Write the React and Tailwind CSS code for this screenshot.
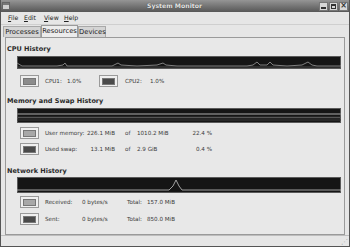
import React from 'react';

const font = { fontFamily: '"DejaVu Sans", "Liberation Sans", sans-serif' };

const Swatch = ({ color }) => (
  <div className="w-[19px] h-[12px] border border-[#9a9a9a] bg-[#efefef] flex items-center justify-center shrink-0">
    <div className={`w-[13px] h-[7px] border border-[#777] ${color}`} />
  </div>
);

const Grid = ({ h }) => {
  const rows = [];
  for (let y = 2; y < h; y += 2) rows.push(y);
  return rows.map((y) => (
    <line key={y} x1="0" y1={y} x2="324" y2={y} stroke="#2a2a2a" strokeWidth="1" />
  ));
};

const CpuGraph = () => (
  <svg width="324" height="13" className="block">
    <rect width="324" height="13" fill="#000" />
    <Grid h={13} />
    <rect x="0.5" y="0.5" width="323" height="12" fill="none" stroke="#5a5a5a" />
    <polyline
      fill="none"
      stroke="#9a9a9a"
      strokeWidth="0.8"
      points="0,7 5,10 40,10 46,9 48,7 50,10 95,10 99,8 101,7 104,9 120,10 140,9 146,7 149,9 160,10 230,10 236,9 240,6 243,9 250,9 253,6 256,9 270,10 285,9 291,6 295,9 300,10 324,10"
    />
    <polyline fill="none" stroke="#555" strokeWidth="0.8" points="0,11 324,11" />
  </svg>
);

const MemGraph = () => (
  <svg width="324" height="15" className="block">
    <rect width="324" height="15" fill="#000" />
    <Grid h={15} />
    <rect x="0.5" y="0.5" width="323" height="14" fill="none" stroke="#5a5a5a" />
    <line x1="0" y1="6" x2="324" y2="6" stroke="#7a7a7a" strokeWidth="1.4" />
    <line x1="0" y1="9.5" x2="324" y2="9.5" stroke="#555" strokeWidth="1.4" />
    <line x1="0" y1="12" x2="324" y2="12" stroke="#3a3a3a" strokeWidth="1" />
  </svg>
);

const NetGraph = () => (
  <svg width="324" height="16" className="block">
    <rect width="324" height="16" fill="#000" />
    <Grid h={16} />
    <rect x="0.5" y="0.5" width="323" height="15" fill="none" stroke="#5a5a5a" />
    <polyline
      fill="none"
      stroke="#b0b0b0"
      strokeWidth="0.9"
      points="0,13 152,13 156,9 159,3 162,9 165,13 324,13"
    />
  </svg>
);

const Heading = ({ children, className = '' }) => (
  <div className={`text-[6.5px] font-bold text-[#2a2a2a] leading-[10px] pl-[1px] whitespace-nowrap ${className}`}>
    {children}
  </div>
);

export default function App() {
  return (
    <div
      className="w-[350px] h-[247px] bg-[#e6e6e6] border-x border-[#555] flex flex-col overflow-hidden"
      style={font}
    >
      {/* title bar */}
      <div className="h-[12px] bg-gradient-to-b from-[#959595] to-[#575757] flex items-center shrink-0">
        <div className="ml-[1px] w-[8px] h-[8px] bg-[#cfcfcf] border border-[#666] flex items-start">
          <div className="w-full h-[2px] bg-[#777]" />
        </div>
        <div className="flex-1 text-center text-[6.2px] font-bold text-[#e4e4e4] leading-[12px] pl-[20px] [text-shadow:0_0_1px_#333]">
          System Monitor
        </div>
        <div className="flex gap-[1px] mr-[1px]">
          <div className="w-[9px] h-[9px] bg-[#d8d8d8] border border-[#777] flex items-end justify-center pb-[1px]">
            <div className="w-[5px] h-[2px] bg-[#333]" />
          </div>
          <div className="w-[9px] h-[9px] bg-[#d8d8d8] border border-[#777] flex items-center justify-center">
            <div className="w-[5px] h-[5px] border border-[#333] border-t-2" />
          </div>
          <div className="w-[9px] h-[9px] bg-[#d8d8d8] border border-[#777] flex items-center justify-center text-[8px] leading-none font-bold text-[#333]">
            ×
          </div>
        </div>
      </div>

      {/* menu bar */}
      <div className="h-[13px] flex items-center pl-[7px] text-[6.2px] text-[#222] border-b border-[#cfcfcf] shrink-0 whitespace-nowrap">
        <span className="w-[16px]"><u>F</u>ile</span>
        <span className="w-[20px]"><u>E</u>dit</span>
        <span className="w-[20px]"><u>V</u>iew</span>
        <span><u>H</u>elp</span>
      </div>

      {/* tabs */}
      <div className="h-[12px] flex items-end pl-[2px] text-[6.8px] text-[#222] shrink-0 whitespace-nowrap">
        <div className="w-[38px] h-[11px] text-center bg-[#d4d4d4] border border-b-0 border-[#a8a8a8] leading-[10px]">Processes</div>
        <div className="w-[37px] h-[12px] text-center bg-[#ececec] border border-b-0 border-[#9a9a9a] leading-[11px]">Resources</div>
        <div className="w-[28px] h-[11px] text-center bg-[#d4d4d4] border border-b-0 border-[#a8a8a8] leading-[10px]">Devices</div>
      </div>

      {/* notebook page */}
      <div className="mx-[4px] h-[198px] bg-[#e8e8e8] border border-[#9a9a9a] flex flex-col pt-[6px] shrink-0 text-[5.6px] text-[#3a3a3a] whitespace-nowrap">
        <Heading>CPU History</Heading>
        <div className="ml-[11px] mt-[2px]"><CpuGraph /></div>
        <div className="ml-[14px] mt-[6px] flex items-center h-[12px]">
          <Swatch color="bg-[#8c8c8c]" />
          <span className="ml-[6px] w-[22px]">CPU1:</span>
          <span className="w-[32px]">1.0%</span>
          <Swatch color="bg-[#4a4a4a]" />
          <span className="ml-[7px] w-[25px]">CPU2:</span>
          <span>1.0%</span>
        </div>

        <Heading className="mt-[9px]">Memory and Swap History</Heading>
        <div className="ml-[11px] mt-[2px]"><MemGraph /></div>
        <div className="ml-[14px] mt-[4px] flex items-center h-[12px]">
          <Swatch color="bg-[#a8a8a8]" />
          <span className="ml-[6px] w-[38px]">User memory:</span>
          <span className="w-[32px] text-right">226.1 MiB</span>
          <span className="ml-[10px] w-[12px]">of</span>
          <span className="w-[49px]">1010.2 MiB</span>
          <span className="w-[26px] text-right">22.4 %</span>
        </div>
        <div className="ml-[14px] mt-[4px] flex items-center h-[12px]">
          <Swatch color="bg-[#4a4a4a]" />
          <span className="ml-[6px] w-[38px]">Used swap:</span>
          <span className="w-[32px] text-right">13.1 MiB</span>
          <span className="ml-[10px] w-[12px]">of</span>
          <span className="w-[49px]">2.9 GiB</span>
          <span className="w-[26px] text-right">0.4 %</span>
        </div>

        <Heading className="mt-[11px]">Network History</Heading>
        <div className="ml-[11px] mt-[1px]"><NetGraph /></div>
        <div className="ml-[14px] mt-[3px] flex items-center h-[12px]">
          <Swatch color="bg-[#a8a8a8]" />
          <span className="ml-[6px] w-[37px]">Received:</span>
          <span className="w-[45px]">0 bytes/s</span>
          <span className="w-[20px]">Total:</span>
          <span>157.0 MiB</span>
        </div>
        <div className="ml-[14px] mt-[5px] flex items-center h-[12px]">
          <Swatch color="bg-[#4a4a4a]" />
          <span className="ml-[6px] w-[37px]">Sent:</span>
          <span className="w-[45px]">0 bytes/s</span>
          <span className="w-[20px]">Total:</span>
          <span>850.0 MiB</span>
        </div>
      </div>

      {/* status bar */}
      <div className="flex-1 border-t border-[#bdbdbd] bg-[#e6e6e6] flex items-end justify-end">
        <div className="mr-[1px] text-[7px] leading-none text-[#999]">⋰</div>
      </div>
      <div className="h-[1px] bg-[#555] shrink-0" />
    </div>
  );
}
